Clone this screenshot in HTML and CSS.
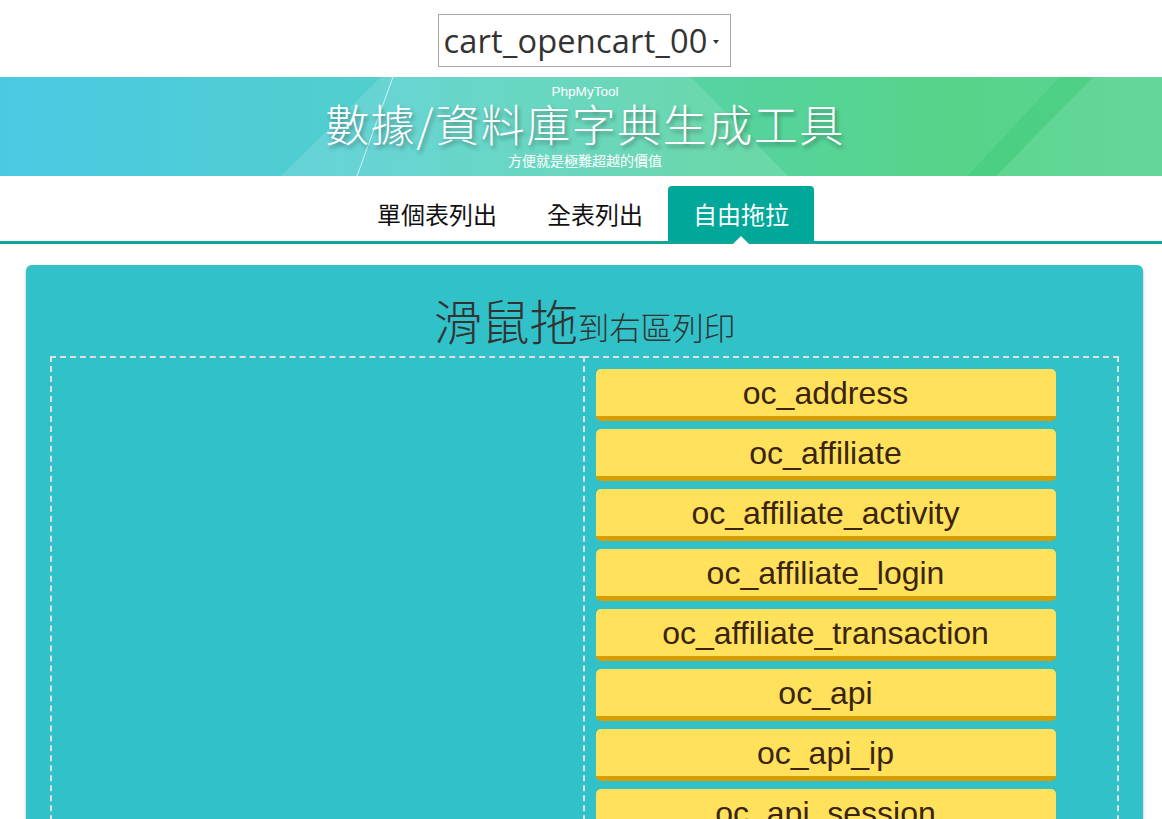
FILE: index.html
```html
<!DOCTYPE html>
<html lang="zh-Hant">
<head>
<meta charset="utf-8">
<title>PhpMyTool 數據/資料庫字典生成工具</title>
<link rel="stylesheet" href="styles.css">
</head>
<body>
<div class="topbar">
  <div class="db-select"><span class="db-name">cart_opencart_00</span><span class="caret"></span></div>
</div>

<header class="banner">
  <svg class="banner-bg" viewBox="0 0 1162 99" preserveAspectRatio="none" aria-hidden="true">
    <defs>
      <linearGradient id="bg" x1="0" y1="0" x2="1" y2="0">
        <stop offset="0" stop-color="#4bc9e4"/>
        <stop offset="0.35" stop-color="#52cfcb"/>
        <stop offset="0.62" stop-color="#56d3a0"/>
        <stop offset="0.82" stop-color="#56d489"/>
        <stop offset="1" stop-color="#5dd496"/>
      </linearGradient>
    </defs>
    <rect x="0" y="0" width="1162" height="99" fill="url(#bg)"/>
    <polygon points="381,0 691,0 788,99 281,99" fill="#ffffff" fill-opacity="0.13"/>
    <polygon points="1060,0 1093,0 996,99 967,99" fill="#3fca78" fill-opacity="0.45"/>
    <polygon points="1093,0 1162,0 1162,99 996,99" fill="#ffffff" fill-opacity="0.05"/>
    <line x1="393" y1="0" x2="357" y2="99" stroke="#ffffff" stroke-opacity="0.7" stroke-width="1"/>
  </svg>
  <div class="banner-text">
    <div class="brand">PhpMyTool</div>
    <h1 class="banner-title">數據/資料庫字典生成工具</h1>
    <div class="banner-sub">方便就是極難超越的價值</div>
  </div>
</header>

<nav class="tabs">
  <a class="tab">單個表列出</a>
  <a class="tab">全表列出</a>
  <a class="tab active">自由拖拉</a>
</nav>

<main class="panel">
  <h2 class="panel-title"><span class="big">滑鼠拖</span><span class="small">到右區列印</span></h2>
  <div class="drop-area">
    <div class="zone zone-left"></div>
    <div class="zone zone-right">
      <div class="item">oc_address</div>
      <div class="item">oc_affiliate</div>
      <div class="item">oc_affiliate_activity</div>
      <div class="item">oc_affiliate_login</div>
      <div class="item">oc_affiliate_transaction</div>
      <div class="item">oc_api</div>
      <div class="item">oc_api_ip</div>
      <div class="item">oc_api_session</div>
      <div class="item">oc_attribute</div>
      <div class="item">oc_attribute_description</div>
    </div>
  </div>
</main>
</body>
</html>
```

FILE: styles.css
```css
html, body {
  margin: 0;
  padding: 0;
  background: #ffffff;
  overflow: hidden;
  height: 819px;
}

body {
  font-family: "Noto Sans CJK TC", "Noto Sans", sans-serif;
  color: #222;
}

.topbar {
  display: flex;
  justify-content: center;
  padding-top: 14px;
  padding-bottom: 10px;
  padding-left: 6px;
}

.db-select {
  box-sizing: border-box;
  width: 293px;
  height: 53px;
  border: 1px solid #a9a9a9;
  display: flex;
  align-items: center;
  padding-left: 5px;
  background: #fff;
}

.db-name {
  font-family: "Open Sans", sans-serif;
  font-size: 32.6px;
  color: #333;
  letter-spacing: 0.2px;
}

.caret {
  margin-left: 5px;
  margin-top: 2px;
  width: 0;
  height: 0;
  border-left: 3px solid transparent;
  border-right: 3px solid transparent;
  border-top: 4px solid #333;
}

.banner {
  position: relative;
  height: 99px;
  overflow: hidden;
}

.banner-bg {
  position: absolute;
  left: 0;
  top: 0;
  width: 100%;
  height: 100%;
  display: block;
}

.banner-text {
  position: relative;
  display: flex;
  flex-direction: column;
  align-items: center;
  padding-top: 8px;
  padding-left: 8px;
  color: #fff;
}

.brand {
  font-family: "Liberation Sans", Arial, sans-serif;
  font-size: 13.6px;
  line-height: 14px;
  height: 14px;
}

.banner-title {
  margin: 1px 0 0;
  font-weight: 300;
  font-size: 44px;
  line-height: 46px;
  height: 46px;
  letter-spacing: 1.5px;
  text-shadow: 2px 3px 4px rgba(0, 0, 0, 0.35);
}

.banner-sub {
  margin-top: 6px;
  font-size: 14px;
  line-height: 16px;
}

.tabs {
  display: flex;
  justify-content: center;
  margin-top: 10px;
  border-bottom: 3px solid #11a697;
  padding-left: 4px;
}

.tab {
  position: relative;
  display: block;
  padding: 0 25px;
  height: 55px;
  line-height: 56px;
  font-size: 24px;
  color: #111;
  border-radius: 4px 4px 0 0;
}

.tab.active {
  background: #00a899;
  color: #fff;
}

.tab.active::after {
  content: "";
  position: absolute;
  left: 50%;
  bottom: -3px;
  margin-left: -8px;
  width: 0;
  height: 0;
  border-left: 8px solid transparent;
  border-right: 8px solid transparent;
  border-bottom: 8px solid #fff;
}

.panel {
  margin: 21px 19px 0 26px;
  background: #31c1c9;
  border-radius: 6px;
  box-shadow: 0 1px 3px rgba(0, 0, 0, 0.3);
  padding: 24px 24px 40px;
  height: 700px;
  box-sizing: border-box;
}

.panel-title {
  margin: 0 0 7px;
  height: 60px;
  display: flex;
  justify-content: center;
  align-items: baseline;
  font-weight: 300;
  color: #333;
  line-height: 60px;
}

.panel-title .big {
  font-size: 48px;
}

.panel-title .small {
  font-size: 31.5px;
}

.drop-area {
  display: grid;
  grid-template-columns: 1fr 1fr;
}

.zone {
  border: 2px dashed #e0e0e0;
  min-height: 600px;
}

.zone-left {
  border-right: none;
}

.zone-right {
  margin-left: -2px;
  padding: 11px 0 0 11px;
}

.item {
  box-sizing: border-box;
  width: 460px;
  height: 52px;
  padding-top: 2px;
  line-height: 45px;
  margin-bottom: 8px;
  background: #ffe15b;
  border-bottom: 5px solid #d69e00;
  border-radius: 5px;
  text-align: center;
  font-family: "Liberation Sans", Arial, sans-serif;
  font-size: 32px;
  color: #3a2410;
}
```
